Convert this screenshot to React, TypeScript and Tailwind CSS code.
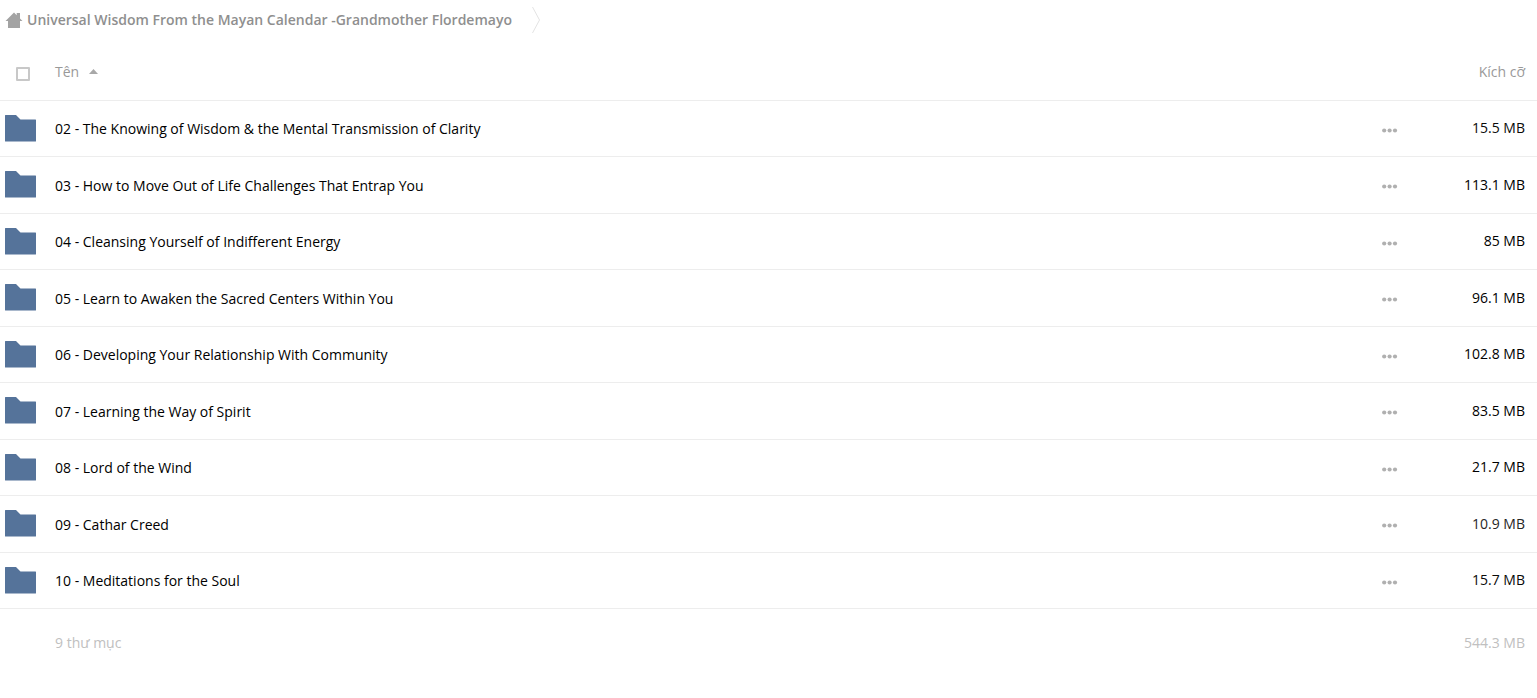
import React, { useState } from "react";

interface Folder {
  name: string;
  size: string;
  color: string;
}

const folders: Folder[] = [
  { name: "02 - The Knowing of Wisdom & the Mental Transmission of Clarity", size: "15.5 MB", color: "text-[#0a0a0a]" },
  { name: "03 - How to Move Out of Life Challenges That Entrap You", size: "113.1 MB", color: "text-black" },
  { name: "04 - Cleansing Yourself of Indifferent Energy", size: "85 MB", color: "text-black" },
  { name: "05 - Learn to Awaken the Sacred Centers Within You", size: "96.1 MB", color: "text-black" },
  { name: "06 - Developing Your Relationship With Community", size: "102.8 MB", color: "text-black" },
  { name: "07 - Learning the Way of Spirit", size: "83.5 MB", color: "text-black" },
  { name: "08 - Lord of the Wind", size: "21.7 MB", color: "text-black" },
  { name: "09 - Cathar Creed", size: "10.9 MB", color: "text-[#262626]" },
  { name: "10 - Meditations for the Soul", size: "15.7 MB", color: "text-[#0a0a0a]" },
];

const HomeIcon = () => (
  <svg width="18" height="16" viewBox="0 0 18 16" fill="#a3a3a3" aria-hidden="true">
    <path d="M9 0.5 L0.5 9 H3 V16 H15 V9 H17.5 L15 6.5 V1 H11.7 V3.2 Z" />
  </svg>
);

const FolderIcon = () => (
  <svg width="31" height="27" viewBox="0 0 31 27" fill="#55739a" aria-hidden="true">
    <path d="M0.5 0 H11 L15.5 4.5 H30.5 Q31 4.5 31 5 V26 Q31 26.5 30.5 26.5 H0.5 Q0 26.5 0 26 V0.5 Q0 0 0.5 0 Z" />
  </svg>
);

const DotsIcon = () => (
  <svg width="16" height="5" viewBox="0 0 16 5" fill="#b0b0b0" aria-hidden="true">
    <circle cx="2.2" cy="2.5" r="2.1" />
    <circle cx="7.6" cy="2.5" r="2.1" />
    <circle cx="13" cy="2.5" r="2.1" />
  </svg>
);

const App = () => {
  const [allSelected, setAllSelected] = useState(false);
  const [ascending, setAscending] = useState(true);

  const rows = ascending ? folders : [...folders].reverse();

  return (
    <div className="min-h-screen bg-white font-['Open_Sans',sans-serif] text-sm text-black">
      <nav aria-label="Breadcrumb" className="flex h-10 items-center pl-[5px]">
        <a href="#" className="flex items-center gap-1 font-semibold text-[#8f8f8f]">
          <HomeIcon />
          Universal Wisdom From the Mayan Calendar -Grandmother Flordemayo
        </a>
        <svg width="10" height="28" viewBox="0 0 10 28" className="ml-5" fill="none" stroke="#e3e3e3" aria-hidden="true">
          <path d="M0.5 1 L7.5 14 L0.5 27" />
        </svg>
      </nav>

      <table className="w-full table-fixed border-collapse">
        <thead>
          <tr className="h-[60px] border-b border-[#ededed] text-[#999999]">
            <th className="w-[55px] pt-2 pl-4 text-left">
              <input
                type="checkbox"
                aria-label="Chọn tất cả"
                checked={allSelected}
                onChange={(e) => setAllSelected(e.target.checked)}
                className="block size-3.5 appearance-none rounded-[1px] border-2 border-[#c8c8c8] checked:bg-[#55739a]"
              />
            </th>
            <th className="pt-1 text-left font-normal">
              <button onClick={() => setAscending(!ascending)} className="flex items-center gap-2.5">
                Tên
                <svg width="9" height="5" viewBox="0 0 9 5" fill="#a8a8a8" className={ascending ? "" : "rotate-180"} aria-hidden="true">
                  <path d="M4.5 0 L9 5 H0 Z" />
                </svg>
              </button>
            </th>
            <th className="w-16" />
            <th className="w-[103px] pt-1 pr-3 text-right font-normal">Kích cỡ</th>
          </tr>
        </thead>
        <tbody>
          {rows.map((folder) => (
            <tr key={folder.name} className="h-14 border-b border-[#ededed] even:h-[57px]">
              <td className="pl-[5px]">
                <FolderIcon />
              </td>
              <td className="pt-0.5">
                <a href="#">{folder.name}</a>
              </td>
              <td className="pt-1 pl-3">
                <button aria-label="Thao tác" className="block">
                  <DotsIcon />
                </button>
              </td>
              <td className={`pr-3 text-right ${folder.color}`}>{folder.size}</td>
            </tr>
          ))}
        </tbody>
        <tfoot>
          <tr className="h-[70px] text-[#c0c0c0]">
            <td />
            <td>9 thư mục</td>
            <td />
            <td className="pr-3 text-right">544.3 MB</td>
          </tr>
        </tfoot>
      </table>
    </div>
  );
};

export default App;
